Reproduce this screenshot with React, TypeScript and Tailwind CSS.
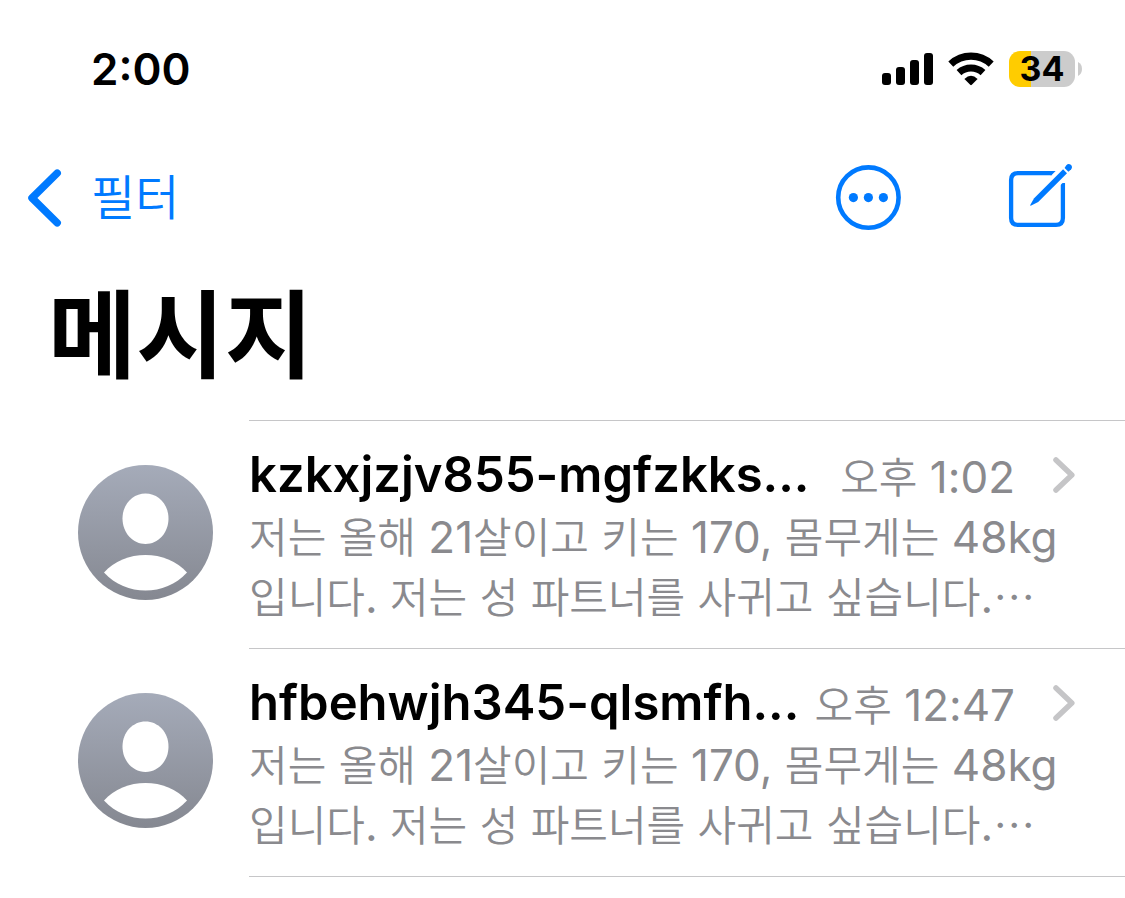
import { Fragment } from 'react';

interface Conversation {
    id: number;
    sender: string;
    time: string;
    preview: string;
}

const conversations: Conversation[] = [
    {
        id: 1,
        sender: 'kzkxjzjv855-mgfzkks...',
        time: '오후 1:02',
        preview: '저는 올해 21살이고 키는 170, 몸무게는 48kg입니다. 저는 성 파트너를 사귀고 싶습니다.…',
    },
    {
        id: 2,
        sender: 'hfbehwjh345-qlsmfh...',
        time: '오후 12:47',
        preview: '저는 올해 21살이고 키는 170, 몸무게는 48kg입니다. 저는 성 파트너를 사귀고 싶습니다.…',
    },
];

// Latin letters, digits and spaces are set a little larger than the Hangul around them
function MixedText({ text }: { text: string }) {
    return text.split(/([^가-힣…]+)/).map((part, i) =>
        i % 2 === 1 ? (
            <span key={i} className="font-['Inter',sans-serif] text-[44px] leading-none font-normal">{part}</span>
        ) : (
            <Fragment key={i}>{part}</Fragment>
        )
    );
}

function StatusBar() {
    return (
        <div className="flex items-center justify-between pt-[39px] pr-[43px] pl-[91px]">
            <span className="text-[44px] leading-[60px] font-semibold">2:00</span>
            <div className="flex items-center gap-[15px]">
                <svg width="51" height="32" viewBox="0 0 51 32" fill="currentColor" aria-hidden="true">
                    <rect x="0" y="20" width="9" height="12" rx="3" />
                    <rect x="14" y="14" width="9" height="18" rx="3" />
                    <rect x="28" y="7" width="9" height="25" rx="3" />
                    <rect x="42" y="0" width="9" height="32" rx="3" />
                </svg>
                <svg width="46" height="34" viewBox="0 0 46 34" fill="none" stroke="currentColor" aria-hidden="true">
                    <path d="M2.8 12.2A29.5 29.5 0 0 1 43.2 12.2" strokeWidth="7.2" />
                    <path d="M11 20.6A18 18 0 0 1 35 20.6" strokeWidth="7.2" />
                    <path d="M16.4 27Q23 20.4 29.6 27L23.8 32.8Q23 33.5 22.2 32.8Z" fill="currentColor" stroke="none" />
                </svg>
                <div className="flex items-center gap-[3px]">
                    <div className="flex h-9 w-[66px] items-center justify-center rounded-[11px] bg-linear-to-r from-[#ffcc00] from-34% to-[#cccccc] to-34%">
                        <span className="text-[34px] leading-9 font-bold">34</span>
                    </div>
                    <svg width="4" height="14" viewBox="0 0 4 14" aria-hidden="true">
                        <path d="M0 0Q4 2 4 7T0 14Z" fill="#cccccc" />
                    </svg>
                </div>
            </div>
        </div>
    );
}

function NavBar() {
    return (
        <nav className="flex items-center justify-between pt-[65px] pr-[52px] pl-[27px] text-[#007aff]">
            <button type="button" className="flex items-center gap-[29px]">
                <svg width="35" height="58" viewBox="0 0 35 58" fill="none" stroke="currentColor" strokeWidth="7.5" strokeLinecap="round" strokeLinejoin="round" aria-hidden="true">
                    <path d="M30.2 4.2L5 29L30.2 53.8" />
                </svg>
                <span className="pb-2 font-['Noto_Sans_CJK_KR',sans-serif] text-[48px] leading-[60px] font-[350]">필터</span>
            </button>
            <div className="flex items-center gap-[106px]">
                <button type="button" aria-label="더 보기">
                    <svg width="66" height="66" viewBox="0 0 66 66" fill="currentColor" aria-hidden="true">
                        <circle cx="33.4" cy="32.6" r="30.2" fill="none" stroke="currentColor" strokeWidth="4.6" />
                        <circle cx="18.4" cy="32.6" r="4.6" />
                        <circle cx="33.4" cy="32.6" r="4.6" />
                        <circle cx="48.4" cy="32.6" r="4.6" />
                    </svg>
                </button>
                <button type="button" aria-label="새로운 메시지">
                    <svg width="66" height="66" viewBox="0 0 66 66" fill="currentColor" className="overflow-visible" aria-hidden="true">
                        <path d="M45.5 8.1H11Q4.1 8.1 4.1 15V53Q4.1 59.9 11 59.9H49Q55.9 59.9 55.9 53V18" fill="none" stroke="currentColor" strokeWidth="4.3" />
                        <path d="M44 10.3L48.4 5.9L52 2V13Z" fill="white" />
                        <path d="M43.5 5.9H48.6L44.4 10.3H43.5Z" />
                        <path d="M53 20.5L58.6 14.9V12H50Z" fill="white" />
                        <path d="M56.1 4.3L60 8.2L31.2 37L24.2 40.6Q22.8 41.2 23.4 39.8L27.1 33.2Z" />
                        <path d="M57.6 2.9L59.3 0.2Q61.5 -2 63.8 -0.2Q66 2 64.2 4.3L61.4 6.7Z" />
                    </svg>
                </button>
            </div>
        </nav>
    );
}

function Avatar() {
    return (
        <svg width="135" height="135" viewBox="0 0 135 135" className="mt-11 shrink-0" aria-hidden="true">
            <defs>
                <linearGradient id="avatar" x1="0" y1="0" x2="0" y2="1">
                    <stop offset="0" stopColor="#a5abb9" />
                    <stop offset="1" stopColor="#858891" />
                </linearGradient>
            </defs>
            <circle cx="67.5" cy="67.5" r="67.5" fill="url(#avatar)" />
            <path d="M67.5 28.5C80 28.5 90.5 39 90.5 53.5C90.5 68 80 79 67.5 79S44.5 68 44.5 53.5C44.5 39 55 28.5 67.5 28.5Z" fill="white" />
            <path d="M26 107.5C46 84 89 84 109 107.5C87 131.5 48 131.5 26 107.5Z" fill="white" />
        </svg>
    );
}

function ConversationRow({ conversation }: { conversation: Conversation }) {
    return (
        <li>
            <a href={`#conversation-${conversation.id}`} className="flex items-start gap-9 pl-[78px]">
                <Avatar />
                <div className="min-w-0 flex-1 border-b border-[#c6c6c8] pt-6 pr-[50px] pb-[23px]">
                    <div className="flex items-center justify-between">
                        <h2 className="text-[49px] leading-[60px] font-semibold whitespace-nowrap">{conversation.sender}</h2>
                        <div className="flex items-center gap-[38px]">
                            <time className="font-['Noto_Sans_CJK_KR',sans-serif] text-[42px] leading-[60px] font-[350] whitespace-nowrap text-[#8a8a8e]">
                                <MixedText text={conversation.time} />
                            </time>
                            <svg width="22" height="36" viewBox="0 0 22 36" fill="none" stroke="#c5c5c7" strokeWidth="5.5" strokeLinecap="round" strokeLinejoin="round" aria-hidden="true">
                                <path d="M3 3L18.8 18L3 33" />
                            </svg>
                        </div>
                    </div>
                    <p className="font-['Noto_Sans_CJK_KR',sans-serif] text-[42px] leading-[60px] font-[350] text-[#8a8a8e]">
                        <MixedText text={conversation.preview} />
                    </p>
                </div>
            </a>
        </li>
    );
}

export default function App() {
    return (
        <main className="min-h-screen bg-white font-['Inter','Noto_Sans_CJK_KR',sans-serif] text-black">
            <StatusBar />
            <NavBar />
            <h1 className="pt-[30px] pb-6 pl-12 font-['Noto_Sans_CJK_KR',sans-serif] text-[96px] leading-[134px] font-bold">메시지</h1>
            <ul>
                <li className="ml-[249px] border-t border-[#c6c6c8]" aria-hidden="true" />
                {conversations.map((conversation) => (
                    <ConversationRow key={conversation.id} conversation={conversation} />
                ))}
            </ul>
        </main>
    );
}
